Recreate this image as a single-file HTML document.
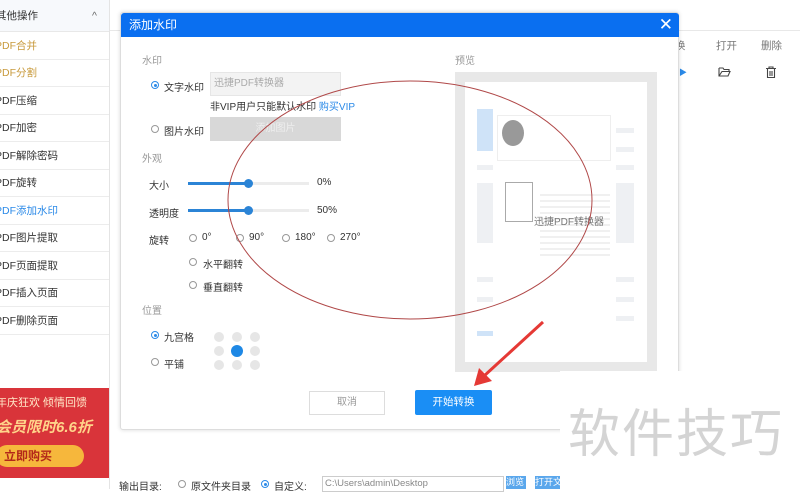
<!DOCTYPE html>
<html><head><meta charset="utf-8"><style>
*{margin:0;padding:0;box-sizing:border-box}
body{width:800px;height:489px;overflow:hidden;background:#fff;position:relative;font-family:"Liberation Sans","Noto Sans CJK SC",sans-serif;font-size:10px;color:#333}
.a{position:absolute;white-space:nowrap}
.side{left:0;top:0;width:110px;height:489px;border-right:1px solid #e4e4e4;background:#fff;overflow:hidden}
.it{position:absolute;left:0;width:110px;height:28px;border-bottom:1px solid #ececec;font-size:10.5px;line-height:28px;text-indent:-5px}
.rd{position:absolute;width:8px;height:8px;border:1px solid #999;border-radius:50%;background:#fff}
.rd.on{border-color:#2b8ae8}
.rd.on:after{content:"";position:absolute;left:1.5px;top:1.5px;width:3px;height:3px;border-radius:50%;background:#2b8ae8}
.dot{position:absolute;width:10px;height:10px;border-radius:50%;background:#e6e6e6}
.gb{position:absolute;background:#eef0f3}
</style></head><body>
<div class="a side">
<div class="a" style="left:0;top:0;width:110px;height:32px;background:#f7f9fc;border-bottom:1px solid #e8e8e8;font-size:10.5px;line-height:32px;text-indent:-4px">其他操作<span style="position:absolute;left:92px;color:#666;text-indent:0">^</span></div>
<div class="it" style="top:32px;color:#c89a3c">PDF合并</div>
<div class="it" style="top:59px;color:#c89a3c">PDF分割</div>
<div class="it" style="top:87px">PDF压缩</div>
<div class="it" style="top:114px">PDF加密</div>
<div class="it" style="top:142px">PDF解除密码</div>
<div class="it" style="top:169px">PDF旋转</div>
<div class="it" style="top:197px;color:#2b8ae8">PDF添加水印</div>
<div class="it" style="top:224px">PDF图片提取</div>
<div class="it" style="top:252px">PDF页面提取</div>
<div class="it" style="top:279px">PDF插入页面</div>
<div class="it" style="top:307px">PDF删除页面</div>
<div class="a" style="left:97px;top:405px;color:#ccc">×</div>
<div class="a" style="left:0;top:388px;width:110px;height:90px;background:#d9343a">
<div class="a" style="left:-4px;top:6px;color:#ffe8c8;font-size:11px">年庆狂欢 倾情回馈</div>
<div class="a" style="left:-4px;top:28px;color:#ffd48a;font-size:15px;font-weight:bold;font-style:italic">会员限时6.6折</div>
<div class="a" style="left:-4px;top:57px;width:88px;height:22px;border-radius:11px;background:#f6b73c;color:#b3271a;font-size:12px;font-weight:bold;line-height:22px;padding-left:8px">立即购买</div>
</div>
</div>
<div class="a" style="left:110px;top:30px;width:690px;height:1px;background:#e8e8e8"></div>
<div class="a" style="left:675px;top:38px;color:#777;font-size:10.5px">换</div>
<div class="a" style="left:716px;top:38px;color:#777;font-size:10.5px">打开</div>
<div class="a" style="left:761px;top:38px;color:#777;font-size:10.5px">删除</div>
<div class="a" style="left:679px;top:67px;color:#2b8ae8;font-size:8px">▶</div>
<svg class="a" style="left:718px;top:66px" width="14" height="12"><path d="M1 2h4l1 1.5h5v2M1 2v8h9l2-4.5H4L1 10" fill="none" stroke="#444" stroke-width="1.1"/></svg>
<svg class="a" style="left:765px;top:66px" width="12" height="13"><path d="M1 2.5h10M4 2.5V1h4v1.5M2.5 2.5v9h7v-9M5 5v5M7 5v5" fill="none" stroke="#444" stroke-width="1.1"/></svg>

<div class="a" style="left:120px;top:12px;width:559px;height:418px;background:#fff;border:1px solid #ddd;border-radius:3px;box-shadow:0 0 4px rgba(0,0,0,.15)">
<div class="a" style="left:0;top:0;width:558px;height:24px;background:#0a6ff0;border-radius:3px 3px 0 0;color:#fff;font-size:12px;line-height:24px;padding-left:8px">添加水印<span style="position:absolute;right:6px;top:0;font-size:17px">✕</span></div>
</div>
<div class="a" style="left:142px;top:52px;color:#999;font-size:10px">水印</div>
<div class="rd on" style="left:151px;top:81px"></div>
<div class="a" style="left:164px;top:79px;font-size:10px">文字水印</div>
<div class="a" style="left:210px;top:72px;width:131px;height:24px;background:#f3f3f3;border:1px solid #e6e6e6;color:#aaa;font-size:10px;line-height:22px;padding-left:3px">迅捷PDF转换器</div>
<div class="a" style="left:210px;top:98px;font-size:10px">非VIP用户只能默认水印 <span style="color:#2b8ae8">购买VIP</span></div>
<div class="rd" style="left:151px;top:125px"></div>
<div class="a" style="left:164px;top:123px;font-size:10px">图片水印</div>
<div class="a" style="left:210px;top:117px;width:131px;height:24px;background:#d8d8d8;color:#eee;font-size:10px;line-height:24px;text-align:center">添加图片</div>
<div class="a" style="left:142px;top:150px;color:#999;font-size:10px">外观</div>
<div class="a" style="left:149px;top:177px;font-size:10px">大小</div>
<div class="a" style="left:188px;top:182px;width:121px;height:3px;background:#ececec"></div>
<div class="a" style="left:188px;top:182px;width:60px;height:3px;background:#2b84d6"></div>
<div class="a" style="left:244px;top:179px;width:9px;height:9px;border-radius:50%;background:#2b84d6"></div>
<div class="a" style="left:317px;top:177px;font-size:10px">0%</div>
<div class="a" style="left:149px;top:205px;font-size:10px">透明度</div>
<div class="a" style="left:188px;top:209px;width:121px;height:3px;background:#ececec"></div>
<div class="a" style="left:188px;top:209px;width:60px;height:3px;background:#2b84d6"></div>
<div class="a" style="left:244px;top:206px;width:9px;height:9px;border-radius:50%;background:#2b84d6"></div>
<div class="a" style="left:317px;top:205px;font-size:10px">50%</div>
<div class="a" style="left:149px;top:232px;font-size:10px">旋转</div>
<div class="rd" style="left:189px;top:234px"></div><div class="a" style="left:202px;top:232px">0°</div>
<div class="rd" style="left:236px;top:234px"></div><div class="a" style="left:249px;top:232px">90°</div>
<div class="rd" style="left:282px;top:234px"></div><div class="a" style="left:295px;top:232px">180°</div>
<div class="rd" style="left:327px;top:234px"></div><div class="a" style="left:340px;top:232px">270°</div>
<div class="rd" style="left:189px;top:258px"></div><div class="a" style="left:203px;top:256px">水平翻转</div>
<div class="rd" style="left:189px;top:281px"></div><div class="a" style="left:203px;top:279px">垂直翻转</div>
<div class="a" style="left:142px;top:302px;color:#999;font-size:10px">位置</div>
<div class="rd on" style="left:151px;top:331px"></div><div class="a" style="left:164px;top:329px">九宫格</div>
<div class="rd" style="left:151px;top:358px"></div><div class="a" style="left:164px;top:356px">平铺</div>
<div class="dot" style="left:214px;top:332px"></div><div class="dot" style="left:232px;top:332px"></div><div class="dot" style="left:250px;top:332px"></div>
<div class="dot" style="left:214px;top:346px"></div><div class="dot" style="left:231px;top:345px;width:12px;height:12px;background:#1e88e5"></div><div class="dot" style="left:250px;top:346px"></div>
<div class="dot" style="left:214px;top:360px"></div><div class="dot" style="left:232px;top:360px"></div><div class="dot" style="left:250px;top:360px"></div>

<div class="a" style="left:455px;top:52px;color:#999;font-size:10px">预览</div>
<div class="a" style="left:455px;top:72px;width:202px;height:300px;background:#e8e8e8"></div>
<div class="a" style="left:465px;top:82px;width:182px;height:280px;background:#fff"></div>
<div class="a" style="left:477px;top:109px;width:16px;height:42px;background:#cfe3f8"></div>
<div class="gb" style="left:477px;top:183px;width:16px;height:60px"></div>
<div class="gb" style="left:616px;top:183px;width:18px;height:60px"></div>
<div class="gb" style="left:477px;top:165px;width:16px;height:5px"></div>
<div class="gb" style="left:616px;top:128px;width:18px;height:5px"></div>
<div class="gb" style="left:616px;top:147px;width:18px;height:5px"></div>
<div class="gb" style="left:616px;top:165px;width:18px;height:5px"></div>
<div class="gb" style="left:616px;top:277px;width:18px;height:5px"></div>
<div class="gb" style="left:616px;top:297px;width:18px;height:5px"></div>
<div class="gb" style="left:616px;top:316px;width:18px;height:5px"></div>
<div class="gb" style="left:477px;top:277px;width:16px;height:5px"></div>
<div class="gb" style="left:477px;top:297px;width:16px;height:5px"></div>
<div class="a" style="left:477px;top:331px;width:16px;height:5px;background:#cfe3f8"></div>
<div class="a" style="left:497px;top:115px;width:114px;height:46px;border:1px solid #eee"></div>
<div class="a" style="left:502px;top:120px;width:22px;height:26px;border-radius:50%;background:#999"></div>
<div class="a" style="left:540px;top:190px;width:70px;height:70px;background:repeating-linear-gradient(#fff 0 4px,#f0f0f0 4px 6px)"></div>
<div class="a" style="left:505px;top:182px;width:28px;height:40px;border:1px solid #aaa"></div>
<div class="a" style="left:534px;top:213px;color:#777;font-size:10px">迅捷PDF转换器</div>

<div class="a" style="left:309px;top:391px;width:76px;height:24px;border:1px solid #ddd;background:#fff;color:#999;line-height:22px;text-align:center;font-size:10px">取消</div>
<div class="a" style="left:415px;top:390px;width:77px;height:25px;background:#1a8ef5;color:#fff;line-height:25px;text-align:center;font-size:10.5px;border-radius:2px">开始转换</div>

<svg class="a" style="left:0;top:0" width="800" height="489">
<ellipse cx="410" cy="200" rx="182" ry="119" fill="none" stroke="#b04848" stroke-width="1"/>
<line x1="543" y1="322" x2="484" y2="376" stroke="#e53935" stroke-width="3"/>
<path d="M474 386 L479 368 L492 381 Z" fill="#e53935"/>
</svg>

<div class="a" style="left:560px;top:371px;width:240px;height:118px;background:#fff"></div>
<div class="a" style="left:568px;top:392px;color:#d4d4d4;font-size:52px;letter-spacing:2px;font-family:'Noto Sans CJK SC',sans-serif">软件技巧</div>

<div class="a" style="left:119px;top:478px;font-size:10px">输出目录:</div>
<div class="rd" style="left:178px;top:480px"></div><div class="a" style="left:191px;top:478px">原文件夹目录</div>
<div class="rd on" style="left:261px;top:480px"></div><div class="a" style="left:274px;top:478px">自定义:</div>
<div class="a" style="left:322px;top:476px;width:182px;height:16px;border:1px solid #ccc;color:#888;font-size:9.5px;line-height:14px;padding-left:2px">C:\Users\admin\Desktop</div>
<div class="a" style="left:506px;top:476px;width:20px;height:13px;background:#5aa7ec;color:#fff;font-size:9px;line-height:13px">浏览</div>
<div class="a" style="left:535px;top:476px;width:25px;height:13px;background:#5aa7ec;color:#fff;font-size:9px;line-height:13px;overflow:hidden">打开文</div>
</body></html>
